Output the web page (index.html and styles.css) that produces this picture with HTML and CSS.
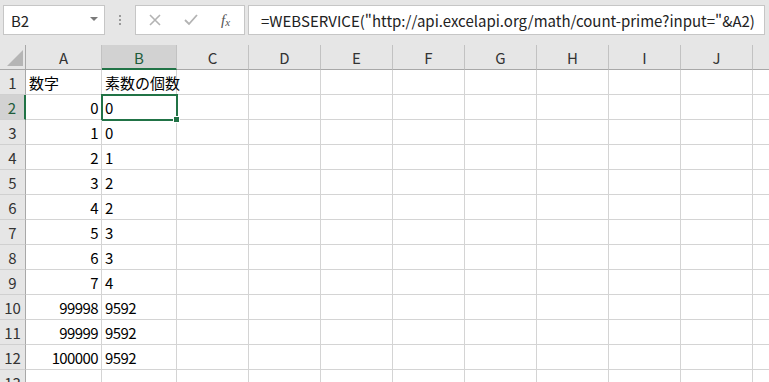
FILE: index.html
```html
<!DOCTYPE html>
<html lang="ja">
<head>
  <meta charset="UTF-8" />
  <title>Excel - WEBSERVICE</title>
  <link rel="stylesheet" href="styles.css">
</head>
<body>
  <div class="toolbar">
    <div class="namebox"><span>B2</span><span class="caret"></span></div>
    <div class="grip"><i></i><i></i><i></i></div>
    <div class="buttons">
      <svg class="btn" width="12" height="12" viewBox="0 0 12 12"><path d="M1 1 L11 11 M11 1 L1 11" stroke="#b3b3b3" stroke-width="1.6" fill="none"/></svg>
      <svg class="btn" width="14" height="12" viewBox="0 0 14 12"><path d="M1 6 L5 10 L13 1" stroke="#b3b3b3" stroke-width="1.8" fill="none"/></svg>
      <span class="fx">f<sub>x</sub></span>
    </div>
    <div class="formula">=WEBSERVICE("http://api.excelapi.org/math/count-prime?input="&amp;A2)</div>
  </div>

  <div class="sheet">
    <div class="hd corner"><span class="tri"></span></div>
    <div class="hd col">A</div><div class="hd col sel">B</div><div class="hd col">C</div><div class="hd col">D</div><div class="hd col">E</div><div class="hd col">F</div><div class="hd col">G</div><div class="hd col">H</div><div class="hd col">I</div><div class="hd col">J</div><div class="hd col"></div>

    <div class="hd row">1</div><div class="c">数字</div><div class="c">素数の個数</div><div class="c"></div><div class="c"></div><div class="c"></div><div class="c"></div><div class="c"></div><div class="c"></div><div class="c"></div><div class="c"></div><div class="c"></div>
    <div class="hd row sel">2</div><div class="c num">0</div><div class="c val active">0</div><div class="c"></div><div class="c"></div><div class="c"></div><div class="c"></div><div class="c"></div><div class="c"></div><div class="c"></div><div class="c"></div><div class="c"></div>
    <div class="hd row">3</div><div class="c num">1</div><div class="c val">0</div><div class="c"></div><div class="c"></div><div class="c"></div><div class="c"></div><div class="c"></div><div class="c"></div><div class="c"></div><div class="c"></div><div class="c"></div>
    <div class="hd row">4</div><div class="c num">2</div><div class="c val">1</div><div class="c"></div><div class="c"></div><div class="c"></div><div class="c"></div><div class="c"></div><div class="c"></div><div class="c"></div><div class="c"></div><div class="c"></div>
    <div class="hd row">5</div><div class="c num">3</div><div class="c val">2</div><div class="c"></div><div class="c"></div><div class="c"></div><div class="c"></div><div class="c"></div><div class="c"></div><div class="c"></div><div class="c"></div><div class="c"></div>
    <div class="hd row">6</div><div class="c num">4</div><div class="c val">2</div><div class="c"></div><div class="c"></div><div class="c"></div><div class="c"></div><div class="c"></div><div class="c"></div><div class="c"></div><div class="c"></div><div class="c"></div>
    <div class="hd row">7</div><div class="c num">5</div><div class="c val">3</div><div class="c"></div><div class="c"></div><div class="c"></div><div class="c"></div><div class="c"></div><div class="c"></div><div class="c"></div><div class="c"></div><div class="c"></div>
    <div class="hd row">8</div><div class="c num">6</div><div class="c val">3</div><div class="c"></div><div class="c"></div><div class="c"></div><div class="c"></div><div class="c"></div><div class="c"></div><div class="c"></div><div class="c"></div><div class="c"></div>
    <div class="hd row">9</div><div class="c num">7</div><div class="c val">4</div><div class="c"></div><div class="c"></div><div class="c"></div><div class="c"></div><div class="c"></div><div class="c"></div><div class="c"></div><div class="c"></div><div class="c"></div>
    <div class="hd row">10</div><div class="c num">99998</div><div class="c val">9592</div><div class="c"></div><div class="c"></div><div class="c"></div><div class="c"></div><div class="c"></div><div class="c"></div><div class="c"></div><div class="c"></div><div class="c"></div>
    <div class="hd row">11</div><div class="c num">99999</div><div class="c val">9592</div><div class="c"></div><div class="c"></div><div class="c"></div><div class="c"></div><div class="c"></div><div class="c"></div><div class="c"></div><div class="c"></div><div class="c"></div>
    <div class="hd row">12</div><div class="c num">100000</div><div class="c val">9592</div><div class="c"></div><div class="c"></div><div class="c"></div><div class="c"></div><div class="c"></div><div class="c"></div><div class="c"></div><div class="c"></div><div class="c"></div>
    <div class="hd row">13</div><div class="c"></div><div class="c"></div><div class="c"></div><div class="c"></div><div class="c"></div><div class="c"></div><div class="c"></div><div class="c"></div><div class="c"></div><div class="c"></div><div class="c"></div>
  </div>
</body>
</html>
```

FILE: styles.css
```css
html, body {
  margin: 0;
  height: 100%;
  overflow: hidden;
}
body {
  background-color: #e6e6e6;
  font-family: "Noto Sans CJK JP", "Noto Sans", sans-serif;
  color: #000000;
}
.toolbar {
  display: flex;
  align-items: stretch;
  height: 30px;
  padding: 5px 3px 10px 3px;
}
.namebox {
  width: 102px;
  box-sizing: border-box;
  background-color: #ffffff;
  border: 1px solid #c6c6c6;
  display: flex;
  align-items: center;
  justify-content: space-between;
  padding: 0 6px 0 7px;
  font-size: 15px;
  color: #222222;
}
.caret {
  width: 0;
  height: 0;
  border-left: 4px solid transparent;
  border-right: 4px solid transparent;
  border-top: 4px solid #7a7a7a;
  margin-bottom: 3px;
}
.grip {
  width: 30px;
  display: flex;
  flex-direction: column;
  align-items: center;
  justify-content: center;
  gap: 2px;
}
.grip i {
  width: 2px;
  height: 2px;
  background-color: #9a9a9a;
}
.buttons {
  width: 110px;
  box-sizing: border-box;
  background-color: #ffffff;
  border: 1px solid #c6c6c6;
  display: flex;
  align-items: center;
  padding-left: 13px;
  gap: 23px;
}
.fx {
  font-family: "Liberation Serif", serif;
  font-style: italic;
  font-size: 15px;
  color: #555555;
}
.fx sub {
  font-size: 11px;
  vertical-align: -1px;
}
.formula {
  flex: 1;
  margin-left: 3px;
  margin-right: 1px;
  background-color: #ffffff;
  border: 1px solid #c6c6c6;
  display: flex;
  align-items: center;
  padding-left: 12px;
  font-size: 15px;
  color: #222222;
  white-space: nowrap;
  overflow: hidden;
}
.sheet {
  display: grid;
  grid-template-columns: 26px 76px 75px repeat(9, 72px);
  grid-auto-rows: 25px;
  background-color: #ffffff;
  font-size: 15px;
}
.c {
  border-right: 1px solid #d4d4d4;
  border-bottom: 1px solid #d4d4d4;
  padding: 2px 2px 0 3px;
  line-height: 22px;
  white-space: nowrap;
  position: relative;
}
.num {
  text-align: right;
  letter-spacing: -0.6px;
  padding-right: 3px;
}
.val {
  letter-spacing: -0.6px;
}
.hd {
  background-color: #e6e6e6;
  color: #333333;
  display: flex;
  align-items: center;
  justify-content: center;
  padding-top: 1px;
  box-sizing: border-box;
}
.col {
  border-right: 1px solid #c2c2c2;
  border-bottom: 1px solid #a8a8a8;
}
.row {
  border-right: 1px solid #a8a8a8;
  border-bottom: 1px solid #d0d0d0;
}
.corner {
  border-right: 1px solid #a8a8a8;
  border-bottom: 1px solid #a8a8a8;
  align-items: flex-end;
  justify-content: flex-end;
  padding: 0 2px 3px 0;
}
.tri {
  width: 16px;
  height: 16px;
  background-color: #b5b5b5;
  clip-path: polygon(100% 0, 100% 100%, 0 100%);
}
.col.sel {
  background-color: #d2d2d2;
  color: #1e5c3a;
  border-bottom: 2px solid #217346;
}
.row.sel {
  background-color: #d2d2d2;
  color: #1e5c3a;
  border-right: 2px solid #217346;
}
.active::after {
  content: "";
  position: absolute;
  left: -1px;
  top: -1px;
  right: -2px;
  bottom: -2px;
  border: 2px solid #217346;
}
.active::before {
  content: "";
  position: absolute;
  right: -4px;
  bottom: -4px;
  width: 5px;
  height: 5px;
  background-color: #217346;
  border: 1px solid #ffffff;
  z-index: 1;
}
```
